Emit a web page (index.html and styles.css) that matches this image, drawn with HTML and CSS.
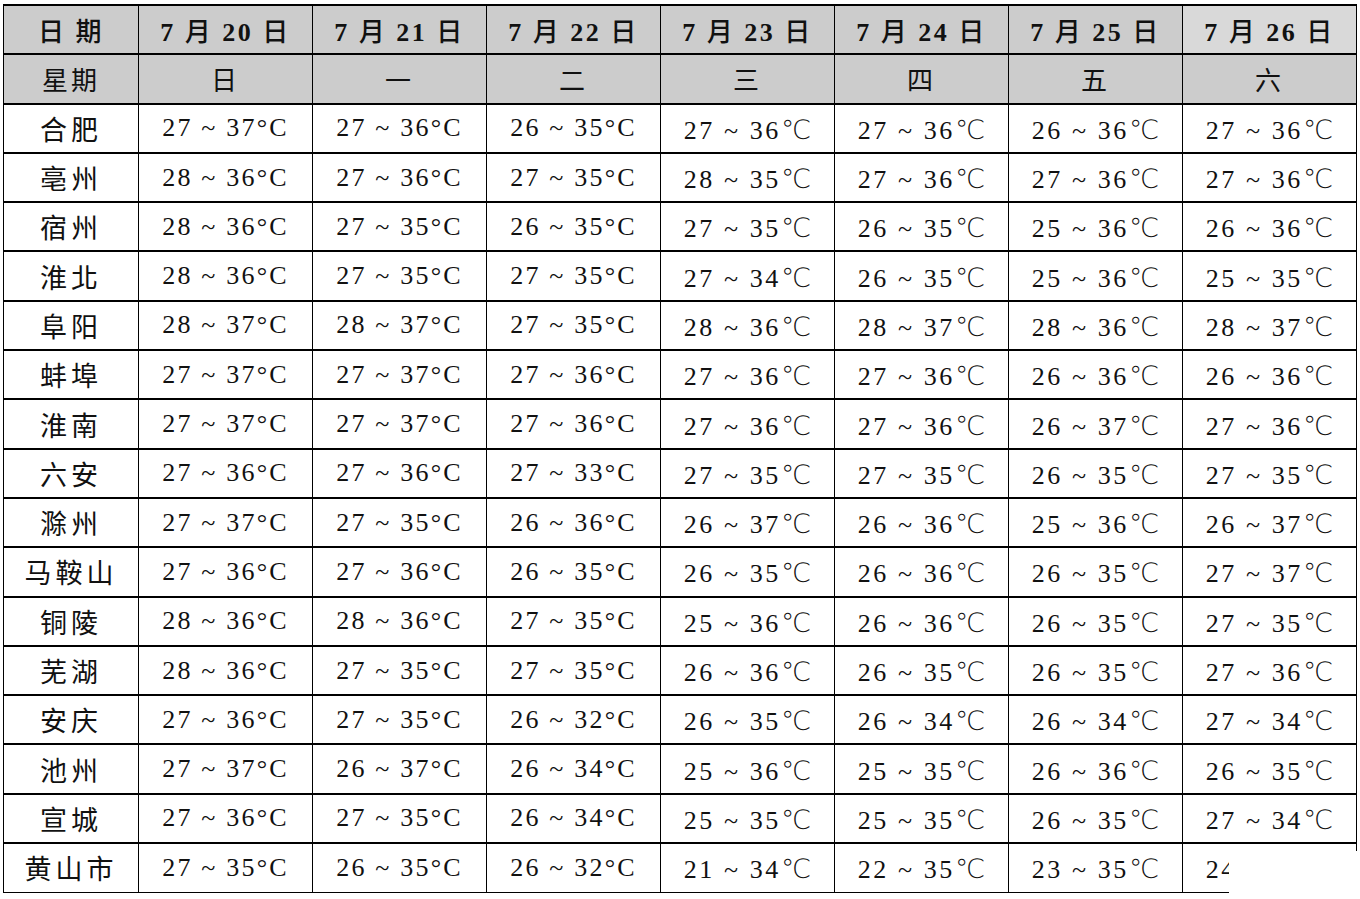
FILE: index.html
```html
<!DOCTYPE html>
<html>
<head>
<meta charset="utf-8">
<title>安徽各市天气预报</title>
<link rel="stylesheet" href="styles.css">
</head>
<body>
<div class="page">
<table class="forecast">
<colgroup>
<col class="c-city"><col class="c-day"><col class="c-day"><col class="c-day"><col class="c-day"><col class="c-day"><col class="c-day"><col class="c-day">
</colgroup>
<thead>
<tr class="row-date">
<th>日 期</th><th><b>7</b> 月 <b>20</b> 日</th><th><b>7</b> 月 <b>21</b> 日</th><th><b>7</b> 月 <b>22</b> 日</th><th><b>7</b> 月 <b>23</b> 日</th><th><b>7</b> 月 <b>24</b> 日</th><th><b>7</b> 月 <b>25</b> 日</th><th class="light"><b>7</b> 月 <b>26</b> 日</th>
</tr>
<tr class="row-week">
<th>星期</th><th>日</th><th>一</th><th>二</th><th>三</th><th>四</th><th>五</th><th>六</th>
</tr>
</thead>
<tbody>
<tr><td>合肥</td><td>27 ~ 37°C</td><td>27 ~ 36°C</td><td>26 ~ 35°C</td><td class="cc">27 ~ 36<span class="deg">℃</span></td><td class="cc">27 ~ 36<span class="deg">℃</span></td><td class="cc">26 ~ 36<span class="deg">℃</span></td><td class="cc">27 ~ 36<span class="deg">℃</span></td></tr>
<tr><td>亳州</td><td>28 ~ 36°C</td><td>27 ~ 36°C</td><td>27 ~ 35°C</td><td class="cc">28 ~ 35<span class="deg">℃</span></td><td class="cc">27 ~ 36<span class="deg">℃</span></td><td class="cc">27 ~ 36<span class="deg">℃</span></td><td class="cc">27 ~ 36<span class="deg">℃</span></td></tr>
<tr><td>宿州</td><td>28 ~ 36°C</td><td>27 ~ 35°C</td><td>26 ~ 35°C</td><td class="cc">27 ~ 35<span class="deg">℃</span></td><td class="cc">26 ~ 35<span class="deg">℃</span></td><td class="cc">25 ~ 36<span class="deg">℃</span></td><td class="cc">26 ~ 36<span class="deg">℃</span></td></tr>
<tr><td>淮北</td><td>28 ~ 36°C</td><td>27 ~ 35°C</td><td>27 ~ 35°C</td><td class="cc">27 ~ 34<span class="deg">℃</span></td><td class="cc">26 ~ 35<span class="deg">℃</span></td><td class="cc">25 ~ 36<span class="deg">℃</span></td><td class="cc">25 ~ 35<span class="deg">℃</span></td></tr>
<tr><td>阜阳</td><td>28 ~ 37°C</td><td>28 ~ 37°C</td><td>27 ~ 35°C</td><td class="cc">28 ~ 36<span class="deg">℃</span></td><td class="cc">28 ~ 37<span class="deg">℃</span></td><td class="cc">28 ~ 36<span class="deg">℃</span></td><td class="cc">28 ~ 37<span class="deg">℃</span></td></tr>
<tr><td>蚌埠</td><td>27 ~ 37°C</td><td>27 ~ 37°C</td><td>27 ~ 36°C</td><td class="cc">27 ~ 36<span class="deg">℃</span></td><td class="cc">27 ~ 36<span class="deg">℃</span></td><td class="cc">26 ~ 36<span class="deg">℃</span></td><td class="cc">26 ~ 36<span class="deg">℃</span></td></tr>
<tr><td>淮南</td><td>27 ~ 37°C</td><td>27 ~ 37°C</td><td>27 ~ 36°C</td><td class="cc">27 ~ 36<span class="deg">℃</span></td><td class="cc">27 ~ 36<span class="deg">℃</span></td><td class="cc">26 ~ 37<span class="deg">℃</span></td><td class="cc">27 ~ 36<span class="deg">℃</span></td></tr>
<tr><td>六安</td><td>27 ~ 36°C</td><td>27 ~ 36°C</td><td>27 ~ 33°C</td><td class="cc">27 ~ 35<span class="deg">℃</span></td><td class="cc">27 ~ 35<span class="deg">℃</span></td><td class="cc">26 ~ 35<span class="deg">℃</span></td><td class="cc">27 ~ 35<span class="deg">℃</span></td></tr>
<tr><td>滁州</td><td>27 ~ 37°C</td><td>27 ~ 35°C</td><td>26 ~ 36°C</td><td class="cc">26 ~ 37<span class="deg">℃</span></td><td class="cc">26 ~ 36<span class="deg">℃</span></td><td class="cc">25 ~ 36<span class="deg">℃</span></td><td class="cc">26 ~ 37<span class="deg">℃</span></td></tr>
<tr><td>马鞍山</td><td>27 ~ 36°C</td><td>27 ~ 36°C</td><td>26 ~ 35°C</td><td class="cc">26 ~ 35<span class="deg">℃</span></td><td class="cc">26 ~ 36<span class="deg">℃</span></td><td class="cc">26 ~ 35<span class="deg">℃</span></td><td class="cc">27 ~ 37<span class="deg">℃</span></td></tr>
<tr><td>铜陵</td><td>28 ~ 36°C</td><td>28 ~ 36°C</td><td>27 ~ 35°C</td><td class="cc">25 ~ 36<span class="deg">℃</span></td><td class="cc">26 ~ 36<span class="deg">℃</span></td><td class="cc">26 ~ 35<span class="deg">℃</span></td><td class="cc">27 ~ 35<span class="deg">℃</span></td></tr>
<tr><td>芜湖</td><td>28 ~ 36°C</td><td>27 ~ 35°C</td><td>27 ~ 35°C</td><td class="cc">26 ~ 36<span class="deg">℃</span></td><td class="cc">26 ~ 35<span class="deg">℃</span></td><td class="cc">26 ~ 35<span class="deg">℃</span></td><td class="cc">27 ~ 36<span class="deg">℃</span></td></tr>
<tr><td>安庆</td><td>27 ~ 36°C</td><td>27 ~ 35°C</td><td>26 ~ 32°C</td><td class="cc">26 ~ 35<span class="deg">℃</span></td><td class="cc">26 ~ 34<span class="deg">℃</span></td><td class="cc">26 ~ 34<span class="deg">℃</span></td><td class="cc">27 ~ 34<span class="deg">℃</span></td></tr>
<tr><td>池州</td><td>27 ~ 37°C</td><td>26 ~ 37°C</td><td>26 ~ 34°C</td><td class="cc">25 ~ 36<span class="deg">℃</span></td><td class="cc">25 ~ 35<span class="deg">℃</span></td><td class="cc">26 ~ 36<span class="deg">℃</span></td><td class="cc">26 ~ 35<span class="deg">℃</span></td></tr>
<tr><td>宣城</td><td>27 ~ 36°C</td><td>27 ~ 35°C</td><td>26 ~ 34°C</td><td class="cc">25 ~ 35<span class="deg">℃</span></td><td class="cc">25 ~ 35<span class="deg">℃</span></td><td class="cc">26 ~ 35<span class="deg">℃</span></td><td class="cc">27 ~ 34<span class="deg">℃</span></td></tr>
<tr><td>黄山市</td><td>27 ~ 35°C</td><td>26 ~ 35°C</td><td>26 ~ 32°C</td><td class="cc">21 ~ 34<span class="deg">℃</span></td><td class="cc">22 ~ 35<span class="deg">℃</span></td><td class="cc">23 ~ 35<span class="deg">℃</span></td><td class="cc">24 ~ 35<span class="deg">℃</span></td></tr>
</tbody>
</table>
<div class="mask"></div>
</div>
</body>
</html>
```

FILE: styles.css
```css
html, body {
  margin: 0;
  padding: 0;
  background: #ffffff;
}

.page {
  position: relative;
  width: 1360px;
  height: 899px;
  padding: 4px 0 0 3px;
  box-sizing: border-box;
}

.forecast {
  border-collapse: collapse;
  table-layout: fixed;
  width: 1353px;
  color: #111111;
}

.c-city { width: 135px; }
.c-day { width: 174px; }

.forecast th,
.forecast td {
  font-family: "Times New Roman", "Liberation Serif", Tinos, "Noto Sans CJK TC", serif;
  padding: 0;
  text-align: center;
  vertical-align: middle;
  border-left: 1px solid #000;
  border-right: 1px solid #000;
  border-top: 2px solid #000;
  border-bottom: 2px solid #000;
  white-space: nowrap;
  overflow: hidden;
}

.forecast tr {
  height: 49.3px;
}

.row-date th {
  background: #cccccc;
  font-size: 26px;
  font-weight: 500;
  letter-spacing: 2.5px;
}

.row-date th b {
  font-weight: bold;
}

.row-date th.light {
  background: #d9d9d9;
}

.row-week th {
  background: #cccccc;
  font-size: 26px;
  font-weight: normal;
  letter-spacing: 3px;
}

.forecast td {
  font-size: 26px;
  letter-spacing: 2.2px;
}

.forecast td:first-child {
  font-size: 27px;
  letter-spacing: 4px;
}

.forecast td.cc {
  letter-spacing: 2.6px;
  padding-top: 3px;
}

.deg {
  font-family: "DejaVu Sans", "Noto Sans CJK TC", sans-serif;
  font-weight: 200;
  font-size: 27px;
  letter-spacing: 0;
}

.forecast tbody tr:last-child td {
  border-bottom-width: 1px;
}

.mask {
  position: absolute;
  left: 1229px;
  top: 851px;
  width: 131px;
  height: 48px;
  background: #ffffff;
}
```
